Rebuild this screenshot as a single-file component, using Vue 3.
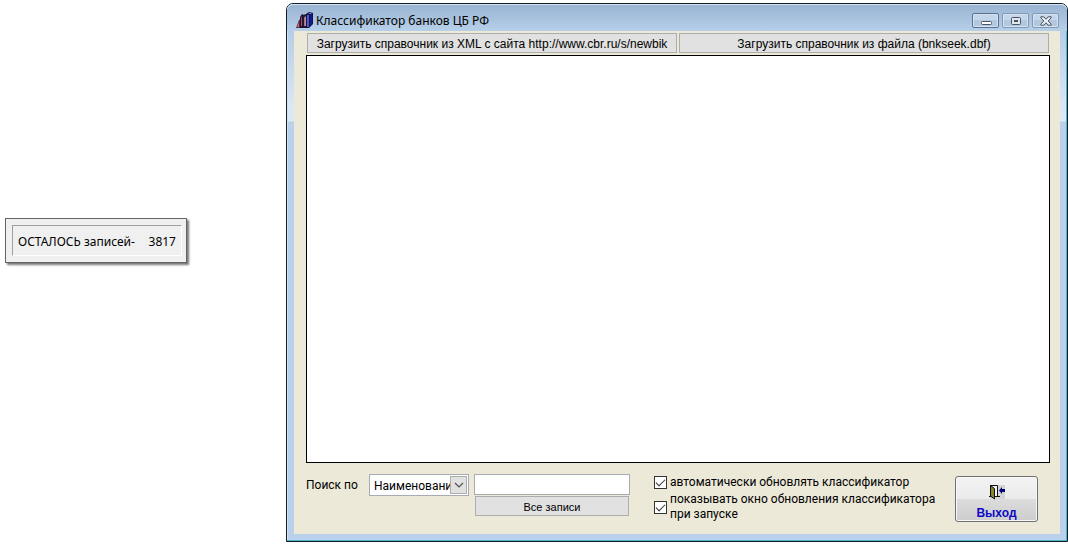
<script setup>
import { ref } from 'vue'

const remaining = ref(3817)
const field = ref('name')
const query = ref('')
const autoUpdate = ref(true)
const showOnStart = ref(true)
</script>

<template>
  <div class="desktop">
    <aside class="progress" role="status">
      <div class="progress-inner">
        <span>ОСТАЛОСЬ записей-</span>
        <span>{{ remaining }}</span>
      </div>
    </aside>

    <main class="window">
      <header class="titlebar">
        <svg class="app-icon" viewBox="0 0 17 17" aria-hidden="true">
          <path d="M0 16 L3 8 L5 7 V16Z" fill="#4d2a4a" />
          <path d="M1 15 L3 10 V15Z" fill="#e0685f" />
          <path d="M4 16 V5 L6 2 L8 3 V16Z" fill="#171334" />
          <path d="M5 14 V6 L6 4 V14Z" fill="#c04a50" />
          <path d="M7 16 V4 L9 2 L11 3 V16Z" fill="#26152c" />
          <path d="M8 14 V6 L9 4 V14Z" fill="#d9605c" />
          <path d="M9 14 V5 L10 4 V14Z" fill="#8fa0cc" />
          <path d="M10 16 V2 L13 0 L17 1 V12 L13 16Z" fill="#10124a" />
          <path d="M11 3 H13 V15 H11Z" fill="#4a5cc8" />
          <path d="M14 3 L16 2 V12 L14 14Z" fill="#15178e" />
          <path d="M12 2 L14 1 L16 1 L14 2Z" fill="#8b9be0" />
        </svg>
        <h1>Классификатор банков ЦБ РФ</h1>
        <div class="caption-buttons">
          <button type="button" class="active" aria-label="Свернуть">
            <svg viewBox="0 0 12 10"><rect x="1.5" y="5.500" width="10" height="3" rx="1" fill="#fff" stroke="#4b535e" /></svg>
          </button>
          <button type="button" aria-label="Развернуть">
            <svg viewBox="0 0 12 10"><rect x="1.5" y="1.500" width="9" height="7" rx="1" fill="#dfe6ee" stroke="#4b535e" /><rect x="4.500" y="4.500" width="3" height="1" fill="#fff" stroke="#4b535e" /></svg>
          </button>
          <button type="button" aria-label="Закрыть">
            <svg viewBox="0 0 12 10"><path d="M.8 .8 H3.800 L6 3.200 L8.200 .8 H11.200 V1.800 L8.200 5 L11.200 8.200 V9.200 H8.200 L6 6.800 L3.800 9.200 H.8 V8.200 L3.800 5 L.8 1.800Z" fill="#e6edf4" stroke="#4b535e" /></svg>
          </button>
        </div>
      </header>

      <div class="client">
        <div class="sources">
          <button type="button" class="flat">Загрузить справочник из XML с сайта http://www.cbr.ru/s/newbik</button>
          <button type="button" class="flat">Загрузить справочник из файла (bnkseek.dbf)</button>
        </div>

        <section class="list" aria-label="Список банков"></section>

        <footer class="controls">
          <label class="search-label" for="field">Поиск по</label>
          <div class="combo">
            <select id="field" v-model="field">
              <option value="name">Наименование</option>
            </select>
            <span class="arrow" aria-hidden="true">
              <svg viewBox="0 0 10 6"><path d="M1 1 L5 5 L9 1" fill="none" stroke="#505050" stroke-width="1.2" /></svg>
            </span>
          </div>
          <div class="search">
            <input v-model="query" type="text" aria-label="Строка поиска" />
            <button type="button" class="flat">Все записи</button>
          </div>
          <div class="options">
            <label><input v-model="autoUpdate" type="checkbox" /><span>автоматически обновлять классификатор</span></label>
            <label><input v-model="showOnStart" type="checkbox" /><span>показывать окно обновления классификатора<br />при запуске</span></label>
          </div>
          <button type="button" class="exit">
            <svg viewBox="0 0 16 16" aria-hidden="true">
              <rect x="1" y="1" width="15" height="14" fill="#d4d4d2" />
              <path d="M1 1.500 H8.500 V12.500 H6" fill="#f4f4f4" stroke="#111" />
              <path d="M0 12.500 H2 M8 12.500 H11" stroke="#111" />
              <path d="M1.500 1.500 L5.500 4.500 V15 L1.500 12Z" fill="#85852c" stroke="#111" />
              <path d="M10 6.500 L13 3 V5 H16 V8 H13 V10Z" fill="#00007d" />
            </svg>
            <span>Выход</span>
          </button>
        </footer>
      </div>
    </main>
  </div>
</template>

<style>
body {
  margin: 0;
  background: #fff;
}
</style>

<style scoped>
* {
  box-sizing: border-box;
}

.desktop {
  display: flex;
  align-items: center;
  gap: 99px;
  min-height: 100vh;
  padding: 3px 0 2px 5px;
  font: 12px/15px "Liberation Sans", Arial, sans-serif;
  color: #000;
}

button,
input,
select {
  margin: 0;
  font: inherit;
  color: inherit;
  border-radius: 0;
}

.progress {
  flex: none;
  width: 182px;
  margin-bottom: 64px;
  padding: 6px 4px 6px 6px;
  border: 1px solid #646464;
  background: #f0f0f0;
  box-shadow: 2px 2px 2px #777;
  font-family: "Noto Sans", "Open Sans", sans-serif;
}

.progress-inner {
  display: flex;
  justify-content: space-between;
  padding: 8px 5px 6px;
  border: 1px solid;
  border-color: #a0a0a0 #fff #fff #a0a0a0;
}

.window {
  display: flex;
  flex: 1;
  flex-direction: column;
  align-self: stretch;
  min-width: 0;
  padding: 0 6px 6px;
  border: 1px solid #101c26;
  border-radius: 7px 7px 0 0;
  background: linear-gradient(#98b4d2 0, #b5cee8 28px, #d9e7f6 100px, #dce9f7 117px, #b9d1ea 118px);
  box-shadow: inset -1px -1px #49b5cb, inset 1px 1px #d6e5f3;
}

.titlebar {
  display: flex;
  align-items: center;
  height: 27px;
  margin: 0 -6px;
  padding: 6px 9px 0;
  border-radius: 6px 6px 0 0;
  background: linear-gradient(#98b3d1, #b7d0ea);
  box-shadow: inset 0 1px #d6e5f3;
}

.app-icon {
  width: 17px;
  height: 17px;
  margin-right: 3px;
}

h1 {
  flex: 1;
  margin: 0;
  font: 12px/16px "Noto Sans", "Open Sans", sans-serif;
}

.caption-buttons {
  display: flex;
  gap: 3px;
  margin-right: -1px;
}

.caption-buttons button {
  display: grid;
  place-items: center;
  width: 27px;
  height: 15px;
  padding: 0;
  border: 1px solid #8299b5;
  border-radius: 2px;
  background: linear-gradient(#c4d6e9 50%, #b1c8df 50%);
  box-shadow: inset 0 0 0 1px #d5e3f1;
}

.caption-buttons .active {
  border-color: #59718f;
}

.caption-buttons svg {
  width: 12px;
  height: 10px;
}

.client {
  display: flex;
  flex: 1;
  flex-direction: column;
  margin: 0 1px 1px;
  padding: 2px 10px 12px 12px;
  background: #ece9d8;
}

.sources {
  display: grid;
  grid-template-columns: 1fr 1fr;
  gap: 2px;
  margin: 0 1px 2px;
}

.flat {
  height: 20px;
  padding: 2px 4px 0;
  border: 1px solid #adadad;
  background: #e1e1e1;
  white-space: nowrap;
}

.list {
  flex: 1;
  border: 1px solid #000;
  background: #fff;
}

.controls {
  display: flex;
  align-items: flex-start;
  padding: 11px 12px 0 0;
  font-family: Roboto, "Liberation Sans", sans-serif;
}

.search-label {
  width: 63px;
  padding-top: 4px;
}

.combo {
  position: relative;
  width: 100px;
  margin-right: 5px;
}

.combo select {
  display: block;
  appearance: none;
  width: 100%;
  height: 22px;
  padding: 2px 18px 0 4px;
  border: 1px solid #a9abb3;
  background: #fff;
}

.arrow {
  position: absolute;
  top: 2px;
  right: 2px;
  bottom: 2px;
  display: grid;
  place-items: center;
  width: 17px;
  border: 1px solid #adadad;
  background: #e1e1e1;
  pointer-events: none;
}

.arrow svg {
  width: 10px;
  height: 6px;
}

.search {
  display: flex;
  flex-direction: column;
  width: 156px;
  margin-right: 24px;
}

.search input {
  width: 100%;
  height: 21px;
  padding: 0 4px;
  border: 1px solid #a9abb3;
  background: #fff;
}

.search .flat {
  margin: 1px 1px 0;
  font-family: "Liberation Sans", Arial, sans-serif;
  font-size: 11px;
}

.options {
  flex: 1;
  padding-top: 1px;
}

.options label {
  display: flex;
  align-items: center;
  gap: 3px;
}

.options label + label {
  padding-top: 2px;
}

.options input {
  appearance: none;
  flex: none;
  width: 13px;
  height: 13px;
  border: 1px solid #333;
  background: #fff;
}

.options input:checked::after {
  content: "";
  display: block;
  width: 8px;
  height: 4px;
  margin: 2px 1px;
  border: solid #333;
  border-width: 0 0 1px 1px;
  transform: rotate(-45deg);
}

.exit {
  display: flex;
  flex-direction: column;
  align-items: center;
  width: 83px;
  height: 46px;
  margin-top: 2px;
  padding: 7px 0 0;
  border: 1px solid #707070;
  border-radius: 3px;
  background: linear-gradient(#f3f3f3, #ebebeb 50%, #dcdcdc 50%, #cdcdcd);
  box-shadow: inset 0 0 0 1px #f8f8f8;
  font-family: "Liberation Sans", Arial, sans-serif;
  font-weight: bold;
  color: #0a0ac8;
}

.exit svg {
  width: 16px;
  height: 16px;
  margin-bottom: 6px;
}
</style>
